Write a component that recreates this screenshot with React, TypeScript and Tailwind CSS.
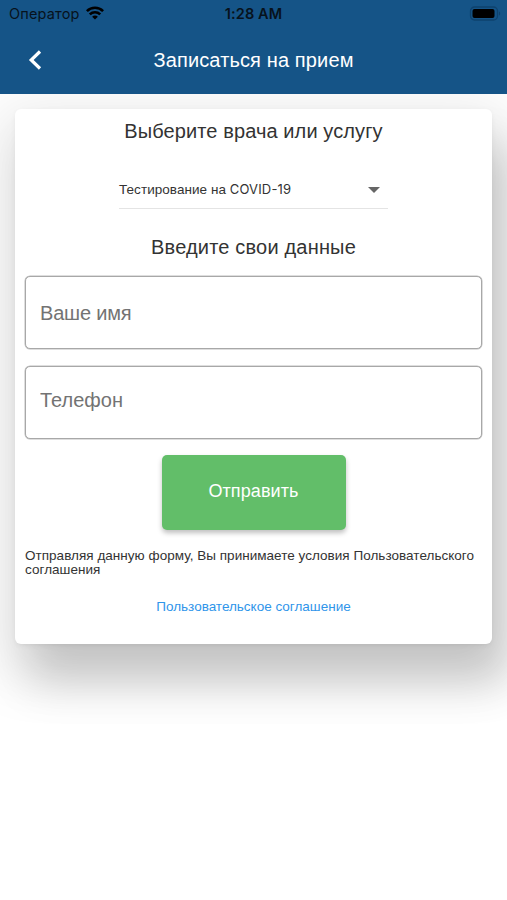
import React, { useState } from 'react';

interface TextFieldProps {
  placeholder: string;
  value: string;
  onChange: (value: string) => void;
  className?: string;
}

const TextField: React.FC<TextFieldProps> = ({ placeholder, value, onChange, className = '' }) => (
  <input
    className={`block h-[73px] w-full rounded-[5px] border border-[#a8a8a8] bg-white px-[14px] text-[20px] text-[#333] shadow-[0_0_0_0.5px_#bdbdbd] outline-none placeholder:text-[#737373] ${className}`}
    placeholder={placeholder}
    value={value}
    onChange={(e) => onChange(e.target.value)}
  />
);

const StatusBar: React.FC = () => (
  <div className="grid h-[27px] grid-cols-3 items-center pl-[9px] pr-[6px] text-[#07121c]">
    <div className="flex items-center gap-[6px]">
      <span className="font-['Inter',sans-serif] text-[14.5px] tracking-[0.15px]">Оператор</span>
      <svg className="-mt-[2px]" width="18" height="14" viewBox="0 0 18 14" fill="none" stroke="#000" strokeWidth="2.6">
        <path d="M0.9 5.1C5.4 0.6 12.6 0.6 17.1 5.1" />
        <path d="M3.8 8.4C6.7 5.6 11.3 5.6 14.2 8.4" />
        <path d="M9 13.6L6.1 10.7C7.7 9.2 10.3 9.2 11.9 10.7Z" fill="#000" stroke="none" />
      </svg>
    </div>
    <span className="-ml-[3px] text-center font-['Inter',sans-serif] text-[14.5px] font-semibold tracking-[0.1px]">1:28 AM</span>
    <svg className="-mt-px justify-self-end" width="32" height="15" viewBox="0 0 32 15">
      <rect x="1.5" y="1" width="27" height="13" rx="4" fill="none" stroke="#0e426d" strokeWidth="1.3" />
      <rect x="3.5" y="3" width="22" height="9" rx="2" fill="#000" />
      <path d="M30 5.5C31.6 6.3 31.6 8.7 30 9.5Z" fill="#0e426d" />
    </svg>
  </div>
);

export default function App() {
  const [name, setName] = useState('');
  const [phone, setPhone] = useState('');

  return (
    <div className="flex h-[900px] w-full flex-col overflow-hidden bg-white font-['Liberation_Sans',sans-serif] text-[#333]">
      <header className="relative z-10 h-[94px] shrink-0 bg-[#155487]">
        <StatusBar />
        <div className="grid h-[66px] grid-cols-[70px_1fr_70px] items-center">
          <button className="flex justify-center" aria-label="Назад">
            <svg width="14" height="20" viewBox="0 0 14 20" fill="none" stroke="#fff" strokeWidth="3.2">
              <path d="M12 1.5L3.2 10L12 18.5" />
            </svg>
          </button>
          <h1 className="whitespace-nowrap text-center text-[20px] tracking-[0.13px] text-white">Записаться на прием</h1>
        </div>
      </header>

      <main className="mx-[15px] mt-[15px] h-[535px] rounded-[6px] bg-white px-[10px] pt-[9px] shadow-[16px_38px_44px_0_rgba(0,0,0,0.17),0_16px_56px_18px_rgba(0,0,0,0.09),0_2px_6px_-2px_rgba(0,0,0,0.1)]">
        <h2 className="text-center text-[20px] leading-[27px] tracking-[0.1px]">Выберите врача или услугу</h2>
        <button className="mx-auto mt-[26px] flex h-[38px] w-[269px] items-center justify-between border-b border-[#e4e4e4] pr-[8px] text-[13.5px]">
          <span className="pt-px tracking-[0.05px]">Тестирование на <span className="font-['Inter',sans-serif] text-[13px] tracking-[0.15px]">COVID-19</span></span>
          <svg width="12" height="6" viewBox="0 0 12 6" fill="#666">
            <path d="M0 0H12L6 6Z" />
          </svg>
        </button>
        <h2 className="mt-[25px] text-center text-[20px] leading-[27px] tracking-[0.18px]">Введите свои данные</h2>
        <div className="mt-[15px] flex flex-col gap-[17px]">
          <TextField className="pt-px tracking-[-0.2px]" placeholder="Ваше имя" value={name} onChange={setName} />
          <TextField className="pb-[4px]" placeholder="Телефон" value={phone} onChange={setPhone} />
        </div>
        <button className="mx-auto mt-[16px] block h-[75px] w-[184px] rounded-[5px] bg-[#62be69] pb-[3px] text-[18px] tracking-[0.1px] text-white shadow-[0_3px_5px_rgba(0,0,0,0.25)]">
          Отправить
        </button>
        <p className="mt-[19px] text-[13.5px] leading-[13.5px] tracking-[0.03px]">
          Отправляя данную форму, Вы принимаете условия Пользовательского соглашения
        </p>
        <a className="mt-[22px] block text-center text-[13.5px] leading-[18px] text-[#2f95ea]" href="#terms">
          Пользовательское соглашение
        </a>
      </main>
    </div>
  );
}
